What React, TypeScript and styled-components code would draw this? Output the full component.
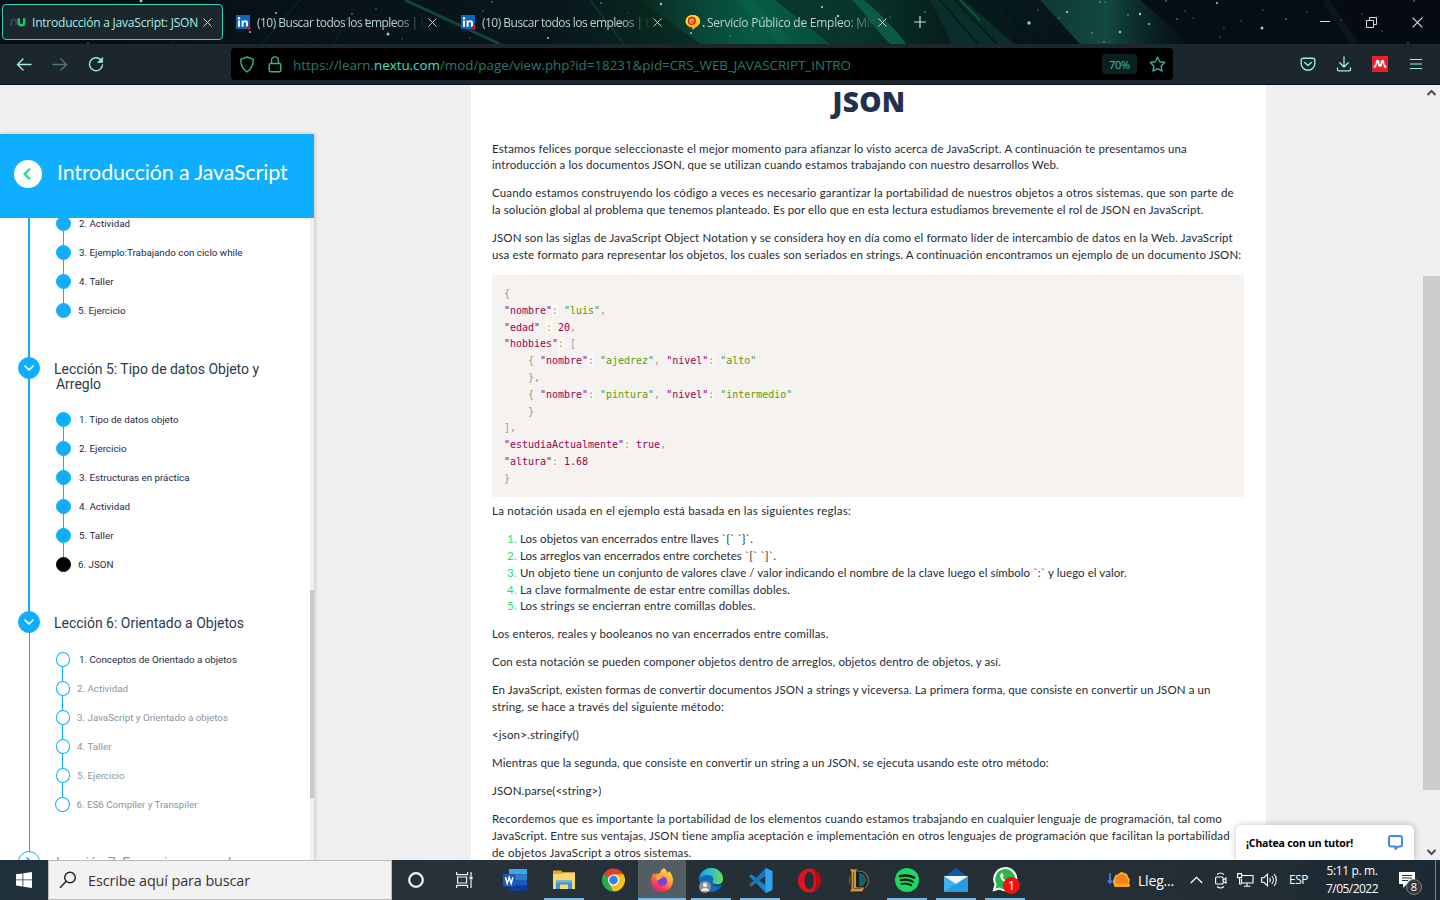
import React, { useLayoutEffect, useRef, useState } from "react";
import styled, { createGlobalStyle } from "styled-components";

const Global = createGlobalStyle`
  * { box-sizing: border-box; }
  body { margin: 0; overflow: hidden; background: #efefef; }
`;

const ui = `"Open Sans", "Noto Sans", sans-serif`;

/* ---------- text set to a given measure ---------- */

const FitSpan = styled.span`
  display: inline-block;
  white-space: pre;
  flex: none;
`;

function Fit({ w, children }: { w: number; children: React.ReactNode }) {
  const ref = useRef<HTMLSpanElement>(null);
  const [spacing, setSpacing] = useState(0);
  useLayoutEffect(() => {
    const el = ref.current;
    if (!el) return;
    const count = (el.textContent || "").length;
    setSpacing((w - el.getBoundingClientRect().width) / Math.max(1, count));
  }, [w]);
  return (
    <FitSpan ref={ref} style={{ letterSpacing: `${spacing}px` }}>
      {children}
    </FitSpan>
  );
}

/* ---------- frame ---------- */

const Screen = styled.div`
  width: 1440px;
  height: 900px;
  display: flex;
  flex-direction: column;
  overflow: hidden;
  font-family: ${ui};
`;

/* ---------- tab strip ---------- */

const TabStrip = styled.header`
  position: relative;
  height: 44px;
  flex: none;
  display: flex;
  align-items: center;
  padding-left: 2px;
  background: #060c14;
`;

const Sky = styled.svg`
  position: absolute;
  inset: 0;
  width: 1440px;
  height: 44px;
`;

const Tab = styled.div<{ $active?: boolean }>`
  position: relative;
  width: 221px;
  height: 36px;
  margin-right: 4px;
  padding: 0 9px 0 ${(p) => (p.$active ? 7 : 8)}px;
  display: flex;
  align-items: center;
  border-radius: 4px;
  border: ${(p) => (p.$active ? "1px solid #35d5bb" : "0")};
  background: ${(p) => (p.$active ? "#1c262d" : "transparent")};
  color: ${(p) => (p.$active ? "#a5f0e0" : "#b5d3cf")};
  font-size: 12px;
`;

const TabIcon = styled.span`
  width: 16px;
  height: 16px;
  margin-right: 6px;
  flex: none;
  display: flex;
  align-items: center;
  justify-content: center;
`;

const TabTitle = styled.span<{ $fade?: boolean }>`
  width: 170px;
  height: 20px;
  line-height: 20px;
  margin-top: 2px;
  flex: none;
  ${(p) => p.$fade && "mask-image: linear-gradient(90deg, #000 138px, transparent 170px);"}
`;

const TabClose = styled.span`
  width: 10px;
  display: flex;
  justify-content: center;
  flex: none;
`;

const NewTab = styled.span`
  position: relative;
  width: 35px;
  display: flex;
  justify-content: center;
`;

const WindowControls = styled.div`
  position: relative;
  margin-left: auto;
  display: flex;
`;

const WindowButton = styled.span`
  width: 46px;
  display: flex;
  justify-content: center;
  align-items: center;
`;

/* ---------- toolbar ---------- */

const Toolbar = styled.nav`
  height: 41px;
  flex: none;
  display: flex;
  align-items: center;
  padding: 0 6px;
  background: #1c262d;
  border-bottom: 1px solid #0a1016;
`;

const ToolButton = styled.span<{ $dim?: boolean }>`
  width: 36px;
  height: 32px;
  display: flex;
  align-items: center;
  justify-content: center;
  color: #9aeedd;
  opacity: ${(p) => (p.$dim ? 0.4 : 1)};
`;

const NavButtons = styled.div`
  width: 225px;
  display: flex;
`;

const AddressBar = styled.div`
  width: 942px;
  height: 32px;
  display: flex;
  align-items: center;
  padding-left: 2px;
  border-radius: 4px;
  background: #000;
  color: #30b49c;
`;

const AddressIcon = styled.span`
  width: 28px;
  flex: none;
  display: flex;
  justify-content: center;
`;

const Url = styled.span`
  margin-left: 4px;
  width: 809px;
  flex: none;
  font-size: 13.4px;
  color: #26796c;
  padding-top: 1px;
  b {
    font-weight: 400;
    color: #3de0c4;
  }
`;

const ZoomChip = styled.span`
  width: 35px;
  height: 20px;
  flex: none;
  display: flex;
  align-items: center;
  justify-content: center;
  border-radius: 3px;
  background: #0a201e;
  color: #3ac7ae;
  font-size: 11px;
`;

const StarSlot = styled.span`
  width: 36px;
  padding-left: 4px;
  flex: none;
  display: flex;
  justify-content: center;
`;

const Extensions = styled.div`
  margin-left: auto;
  display: flex;
`;

/* ---------- page ---------- */

const Page = styled.div`
  height: 775px;
  flex: none;
  display: flex;
  overflow: hidden;
  background: #efefef;
  position: relative;
`;

const Sidebar = styled.aside`
  width: 314px;
  height: 726px;
  margin-top: 49px;
  flex: none;
  background: #fff;
  box-shadow: 1px 0 4px rgba(0, 0, 0, 0.18);
  font-family: Roboto, sans-serif;
`;

const CourseHeader = styled.div`
  height: 84px;
  display: flex;
  align-items: center;
  padding: 0 0 8px 14px;
  background: #0faeff;
  color: #fff;
  font-family: Lato, sans-serif;
  font-size: 21.5px;
`;

const BackButton = styled.span`
  width: 28px;
  height: 28px;
  margin: 3px 15px 0 0;
  border-radius: 50%;
  background: #fff;
  display: flex;
  align-items: center;
  justify-content: center;
`;

const SidebarBody = styled.div`
  height: 642px;
  display: flex;
  overflow: hidden;
`;

const Lessons = styled.div`
  width: 310px;
  margin-top: -9px;
`;

const SideTrack = styled.div`
  width: 4px;
  padding-top: 372px;
  background: #f0f0f0;
`;

const SideThumb = styled.div`
  height: 208px;
  background: #c9c9c9;
`;

const blue = "linear-gradient(#0faeff, #0faeff)";

const Lesson = styled.section<{ $rail: "thick" | "thin" | "none" }>`
  background-repeat: no-repeat;
  ${(p) =>
    p.$rail === "thick"
      ? `background-image: ${blue}; background-position: 28px 0; background-size: 2px 100%;`
      : p.$rail === "thin"
      ? `background-image: ${blue}, ${blue}; background-position: 28px 0, 29px 0; background-size: 2px 42px, 1px 100%;`
      : `background-image: ${blue}; background-position: 29px 0; background-size: 1px 40px;`}
`;

const LessonHead = styled.div<{ $tall?: boolean; $muted?: boolean }>`
  height: ${(p) => (p.$tall ? 80 : 66)}px;
  display: flex;
  align-items: flex-start;
  padding: 32px 0 0 18px;
  color: ${(p) => (p.$muted ? "#8f98a3" : "#2b3a50")};
  font-size: 14px;
  line-height: 15px;
`;

const LessonMark = styled.span<{ $open?: boolean }>`
  width: 22px;
  height: 22px;
  margin-right: 14px;
  flex: none;
  border-radius: 50%;
  display: flex;
  align-items: center;
  justify-content: center;
  border: 1px solid #0faeff;
  background: ${(p) => (p.$open ? "#0faeff" : "#fff")};
  color: ${(p) => (p.$open ? "#fff" : "#0faeff")};
`;

const LessonTitle = styled.div`
  padding-top: 5px;
  display: flex;
  flex-direction: column;
`;

const SecondLine = styled.span`
  padding-left: 2px;
`;

const Item = styled.div<{ $last?: boolean; $first?: boolean; $open?: boolean; $muted?: boolean }>`
  height: 29px;
  display: flex;
  align-items: center;
  padding-left: ${(p) => (p.$open && p.$last ? 55 : p.$open ? 55.5 : 56)}px;
  color: ${(p) => (p.$muted ? "#8d95a0" : "#1d2c44")};
  font-size: 9.8px;
  background-image: ${blue};
  background-repeat: no-repeat;
  background-size: 1px ${(p) => (p.$last || p.$first ? "15px" : "100%")};
  background-position: ${(p) => (p.$open ? 62 : 63)}px ${(p) => (p.$first ? "14px" : "0")};
`;

const Dot = styled.span<{ $kind: "done" | "current" | "open" }>`
  width: ${(p) => (p.$kind === "open" ? 14.5 : 15)}px;
  height: 15px;
  flex: none;
  border-radius: 50%;
  border: 1px solid ${(p) => (p.$kind === "current" ? "#000" : "#0faeff")};
  background: ${(p) => (p.$kind === "done" ? "#0faeff" : p.$kind === "current" ? "#000" : "#fff")};
`;

const ItemText = styled.span<{ $gap: number }>`
  margin-left: ${(p) => p.$gap}px;
  line-height: 14px;
  margin-top: 1px;
`;

const Article = styled.main`
  width: 795px;
  margin-left: 157px;
  padding: 0 21px;
  flex: none;
  background: #fff;
  font-family: Lato, sans-serif;
  font-size: 11.5px;
  line-height: 16.8px;
  color: #252b33;
`;

const Title = styled.h1`
  margin: 0;
  height: 55.6px;
  padding-left: 1px;
  text-align: center;
  font: 800 28px/33px "Open Sans", sans-serif;
  color: #22304e;
`;

const Para = styled.p`
  margin: 0 0 11.2px;
  display: flex;
  flex-direction: column;
  align-items: flex-start;
`;

const Code = styled.pre`
  margin: 0 0 5.9px;
  padding: 11px 12px;
  width: 752px;
  height: 222.3px;
  background: #f5f2f0;
  font-family: "DejaVu Sans Mono", monospace;
  font-size: 10px;
  line-height: 16.8px;
  letter-spacing: -0.02px;
  color: #333;
`;

const Tok = styled.span<{ $t: "key" | "str" | "pun" | "op" }>`
  color: ${(p) => ({ key: "#905", str: "#690", pun: "#999", op: "#b88a3e" }[p.$t])};
  ${(p) => p.$t === "op" && "background: rgba(255,255,255,.5);"}
`;

const Rules = styled.ol`
  list-style: none;
  margin: 0 0 11.2px;
  padding: 0 0 0 14px;
`;

const Rule = styled.li`
  display: flex;
`;

const RuleNo = styled.span`
  width: 13px;
  margin-left: 1px;
  color: #14e57a;
`;

const PageScroll = styled.div`
  width: 17px;
  margin-left: auto;
  display: flex;
  flex-direction: column;
  align-items: center;
  background: #f0f0f0;
`;

const PageThumb = styled.div`
  width: 17px;
  height: 514px;
  margin: 175px 0 53px;
  background: #cdcdcd;
`;

const ScrollArrow = styled.svg`
  width: 17px;
  height: 16px;
  flex: none;
`;

const Chat = styled.div`
  position: absolute;
  left: 1236px;
  bottom: 0;
  width: 178px;
  height: 35px;
  padding: 0 10px;
  display: flex;
  align-items: center;
  justify-content: space-between;
  border-radius: 6px 6px 0 0;
  background: #fff;
  box-shadow: 0 0 6px rgba(0, 0, 0, 0.25);
  font: 700 10.5px/16px "Noto Sans", sans-serif;
  color: #000;
`;

/* ---------- taskbar ---------- */

const Taskbar = styled.footer`
  height: 40px;
  flex: none;
  display: flex;
  background: linear-gradient(90deg, #20303a 0, #27323a 30%, #242f36 55%, #262e35 80%, #1b2a33 100%);
  color: #fff;
`;

const TaskCell = styled.div<{ $active?: boolean; $running?: boolean; $gap?: number }>`
  position: relative;
  width: 48px;
  height: 40px;
  margin-left: ${(p) => p.$gap ?? 0}px;
  flex: none;
  display: flex;
  align-items: center;
  justify-content: center;
  background: ${(p) => (p.$active ? "#525d64" : "transparent")};
  &::after {
    content: "";
    position: absolute;
    bottom: 0;
    left: ${(p) => (p.$active ? 0 : 4)}px;
    right: ${(p) => (p.$active ? 0 : 4)}px;
    height: ${(p) => (p.$active || p.$running ? 2 : 0)}px;
    background: #76b9ed;
  }
`;

const Search = styled.div`
  width: 344px;
  height: 40px;
  flex: none;
  display: flex;
  align-items: center;
  padding-left: 10px;
  border: 1px solid #b9bbbc;
  background: #f2f2f2;
  color: #333;
  font-size: 14.4px;
  gap: 11px;
`;

const Tray = styled.div`
  margin-left: auto;
  width: 334px;
  display: flex;
  align-items: center;
  flex: none;
`;

const TraySlot = styled.span<{ $w: number }>`
  width: ${(p) => p.$w}px;
  height: 40px;
  flex: none;
  display: flex;
  align-items: center;
  justify-content: center;
`;

const Weather = styled.span`
  width: 43px;
  font-size: 14px;
`;

const Lang = styled.span`
  width: 37px;
  padding-left: 8px;
  margin-top: -2px;
  font-size: 11.8px;
`;

const Clock = styled.div`
  width: 52px;
  margin-top: -1px;
  display: flex;
  flex-direction: column;
  align-items: center;
  font-size: 12px;
  line-height: 18px;
`;

const ShowDesktop = styled.span`
  height: 40px;
  width: 5px;
  border-left: 1px solid #7c868c;
  margin-left: auto;
`;

/* ---------- small drawings ---------- */

const Cross = ({ size = 9, color = "#c9dcda" }: { size?: number; color?: string }) => (
  <svg width={size} height={size} viewBox="0 0 10 10" stroke={color} strokeWidth="1.1" fill="none">
    <path d="M.6.6l8.800 8.800M9.400.6L.6 9.400" />
  </svg>
);

const LinkedIn = () => (
  <svg width="16" height="16" viewBox="0 0 16 16">
    <rect x="1" y="1" width="14" height="14" fill="#0a66c2" />
    <g fill="#fff">
      <rect x="3" y="6.4" width="2" height="6.4" />
      <circle cx="4" cy="4.2" r="1.2" />
      <path d="M6.6 6.4h1.9v.9c.4-.7 1.1-1.1 2-1.1 1.900 0 2.500 1.200 2.500 3v3.600h-2V9.500c0-.8-.1-1.600-1.100-1.600-1 0-1.300.7-1.300 1.600v3.300h-2z" />
    </g>
    <circle cx="13.700" cy="13.800" r="2.100" fill="#d11124" />
  </svg>
);

const NextU = () => (
  <svg width="17" height="16" viewBox="0 0 17 16" fill="none" strokeWidth="2.500">
    <path d="M1.300 12V8.200c0-1.800 1-3 2.700-3s2.700 1.200 2.700 3V12" stroke="#34424f" />
    <path d="M9.300 4v4.500c0 1.800 1.100 3 2.900 3s2.900-1.200 2.900-3V4" stroke="#18cf6b" />
  </svg>
);

const Empleo = () => (
  <svg width="17" height="17" viewBox="0 0 17 17">
    <path d="M8.300.5c4.400 0 7.600 2.800 7.600 6.600 0 3-1.900 5.200-4 6.200-1.100.9-2.500 2.300-4 3.200l-.4-2.700C3.300 13.400.7 10.700.7 7.100.7 3.300 3.900.5 8.300.5z" fill="#fbb022" />
    <path d="M8.300.5c4.400 0 7.600 2.800 7.600 6.600 0 1-.3 2-.6 2.800C13 12 4 12 1.300 9.900.9 9 .7 8.100.7 7.100.7 3.300 3.900.5 8.300.5z" fill="#ffd329" />
    <circle cx="7.300" cy="6.800" r="4.300" fill="#d9201f" />
    <path d="M5.300 7h4c0-1.400-.8-2.200-2-2.200s-2.100.9-2.100 2.200.9 2.200 2.200 2.200c.8 0 1.300-.3 1.700-.7" stroke="#ffd329" strokeWidth="1.100" fill="none" />
  </svg>
);

const starField: number[][] = [
  [141, 1, 1.4], [88, 43, 0.8], [276, 13, 1], [250, 32, 1], [352, 14, 0.9], [366, 20, 1.1], [388, 34, 1.5], [376, 9, 0.8],
  [347, 19, 0.7], [402, 39, 0.7], [483, 11, 0.8], [548, 38, 1], [601, 3, 0.9], [492, 2, 0.9], [661, 4, 1.2], [620, 22, 0.7],
  [691, 33, 1], [703.7, 26, 1], [730, 36, 0.8], [741, 18, 0.9], [752, 30, 0.8], [822, 7, 1.1], [838, 16, 1.2], [858, 28, 0.8],
  [925, 12, 0.9], [890, 17, 0.8], [1029, 23, 1.7], [1067, 12, 1.1], [1059, 18, 0.8], [1038, 10, 0.8], [1100, 2, 0.9],
  [1105, 2, 0.8], [1128, 15, 0.9], [1140, 14, 1.2], [1120, 32, 1.2], [1092, 33, 0.9], [1104, 42, 0.9], [1149, 24, 1],
  [1177, 19, 0.9], [1166, 1, 0.9], [1185, 11, 0.8], [1217, 3, 1], [1193, 18, 0.7], [1220, 37, 0.8], [1262, 28, 1.5],
  [1286, 19, 0.9], [1263, 10, 0.8], [1307, 12, 0.7], [1241, 21, 0.7], [1224, 28, 0.7], [1362, 14, 0.8], [1414, 1, 0.9],
  [1382, 31, 0.8], [1408, 43, 0.8], [1341, 20, 0.7], [470, 38, 0.7], [628, 13, 0.6], [580, 24, 0.6],
];

const SkyArt = () => (
  <Sky viewBox="0 0 1440 44" preserveAspectRatio="none">
    <defs>
      <linearGradient id="base" x1="0" x2="1">
        <stop offset="0" stopColor="#070e15" />
        <stop offset=".38" stopColor="#08161c" />
        <stop offset=".46" stopColor="#08281f" />
        <stop offset=".53" stopColor="#09382c" />
        <stop offset=".6" stopColor="#083529" />
        <stop offset=".66" stopColor="#071c1c" />
        <stop offset=".8" stopColor="#060f16" />
        <stop offset="1" stopColor="#060a12" />
      </linearGradient>
      <linearGradient id="band" x1="0" x2="1">
        <stop offset="0" stopColor="#0a5540" stopOpacity=".1" />
        <stop offset=".6" stopColor="#075a42" />
        <stop offset="1" stopColor="#065039" />
      </linearGradient>
      <linearGradient id="band2" x1="0" x2="1">
        <stop offset="0" stopColor="#134f43" stopOpacity=".6" />
        <stop offset=".45" stopColor="#124a3f" />
        <stop offset="1" stopColor="#0b2024" stopOpacity=".1" />
      </linearGradient>
    </defs>
    <rect width="1440" height="44" fill="url(#base)" />
    <path d="M640 0h135l55 44H700z" fill="url(#band)" />
    <path d="M735 0h18l42 44h-16z" fill="#0a6b4d" opacity=".4" />
    <path d="M852 0c14 14 24 30 38 44h16C895 28 880 14 864 0z" fill="#0b5a43" />
    <path d="M405 0l95 44" stroke="#10453a" strokeWidth="3" />
    <path d="M590 0l34 44M790 0l45 44M820 0l30 44" stroke="#0b3d31" strokeWidth="1.500" />
    <path d="M300 0L262 44M180 30l-8 14M345 20l-10 24" stroke="#0b2422" strokeWidth="1.500" />
    <path d="M930 0h34l50 44h-62z" fill="#0b332d" opacity=".8" />
    <path d="M940 0l38 44M955 0l42 44M978 0l44 44M1000 4l40 40" stroke="#05110f" strokeWidth="2" opacity=".6" />
    <path d="M960 0l20 20" stroke="#0d5d45" strokeWidth="1.500" />
    <path d="M1040 0h100l50 44h-110z" fill="url(#band2)" />
    <path d="M1325 0l30 44" stroke="#0a161c" strokeWidth="8" />
    {starField.map(([x, y, r]) => (
      <circle key={`${x}-${y}`} cx={x} cy={y} r={r} fill="#a9e5d8" opacity={r >= 1 ? 0.9 : 0.45} />
    ))}
  </Sky>
);

const Chevron = ({ d }: { d: string }) => (
  <svg width="12" height="12" viewBox="0 0 12 12" fill="none" stroke="currentColor" strokeWidth="1.700" strokeLinecap="round" strokeLinejoin="round">
    <path d={d} />
  </svg>
);

/* ---------- data ---------- */

type Entry = { t: string; w: number };

const lesson4: Entry[] = [
  { t: "2. Actividad", w: 51 },
  { t: "3. Ejemplo:Trabajando con ciclo while", w: 163.5 },
  { t: "4. Taller", w: 34.5 },
  { t: "5. Ejercicio", w: 47.5 },
];
const lesson5: Entry[] = [
  { t: "1. Tipo de datos objeto", w: 99.5 },
  { t: "2. Ejercicio", w: 47.5 },
  { t: "3. Estructuras en práctica", w: 110.5 },
  { t: "4. Actividad", w: 51 },
  { t: "5. Taller", w: 34.5 },
  { t: "6. JSON", w: 35.5 },
];
const lesson6: Entry[] = [
  { t: "1. Conceptos de Orientado a objetos", w: 158 },
  { t: "2. Actividad", w: 51 },
  { t: "3. JavaScript y Orientado a objetos", w: 151 },
  { t: "4. Taller", w: 34.5 },
  { t: "5. Ejercicio", w: 47.5 },
  { t: "6. ES6 Compiler y Transpiler", w: 121 },
];

const rules: Entry[] = [
  { t: "Los objetos van encerrados entre llaves `{` `}`.", w: 233 },
  { t: "Los arreglos van encerrados entre corchetes `[` `]`.", w: 256 },
  { t: "Un objeto tiene un conjunto de valores clave / valor indicando el nombre de la clave luego el símbolo `:` y luego el valor.", w: 607 },
  { t: "La clave formalmente de estar entre comillas dobles.", w: 270 },
  { t: "Los strings se encierran entre comillas dobles.", w: 235.5 },
];

const intro: Entry[][] = [
  [
    { t: "Estamos felices porque seleccionaste el mejor momento para afianzar lo visto acerca de JavaScript. A continuación te presentamos una", w: 695 },
    { t: "introducción a los documentos JSON, que se utilizan cuando estamos trabajando con nuestro desarrollos Web.", w: 567 },
  ],
  [
    { t: "Cuando estamos construyendo los código a veces es necesario garantizar la portabilidad de nuestros objetos a otros sistemas, que son parte de", w: 742 },
    { t: "la solución global al problema que tenemos planteado. Es por ello que en esta lectura estudiamos brevemente el rol de JSON en JavaScript.", w: 711.5 },
  ],
  [
    { t: "JSON son las siglas de JavaScript Object Notation y se considera hoy en día como el formato líder de intercambio de datos en la Web. JavaScript", w: 741 },
    { t: "usa este formato para representar los objetos, los cuales son seriados en strings. A continuación encontramos un ejemplo de un documento JSON:", w: 749.5 },
  ],
];

const closing: Entry[][] = [
  [{ t: "Los enteros, reales y booleanos no van encerrados entre comillas.", w: 336.5 }],
  [{ t: "Con esta notación se pueden componer objetos dentro de arreglos, objetos dentro de objetos, y así.", w: 509 }],
  [
    { t: "En JavaScript, existen formas de convertir documentos JSON a strings y viceversa. La primera forma, que consiste en convertir un JSON a un", w: 719 },
    { t: "string, se hace a través del siguiente método:", w: 232 },
  ],
  [{ t: "<json>.stringify()", w: 87 }],
  [{ t: "Mientras que la segunda, que consiste en convertir un string a un JSON, se ejecuta usando este otro método:", w: 557 }],
  [{ t: "JSON.parse(<string>)", w: 109.5 }],
  [
    { t: "Recordemos que es importante la portabilidad de los elementos cuando estamos trabajando en cualquier lenguaje de programación, tal como", w: 730 },
    { t: "JavaScript. Entre sus ventajas, JSON tiene amplia aceptación e implementación en otros lenguajes de programación que facilitan la portabilidad", w: 738 },
    { t: "de objetos JavaScript a otros sistemas.", w: 199.5 },
  ],
];

const Paragraphs = ({ items }: { items: Entry[][] }) => (
  <>
    {items.map((lines, i) => (
      <Para key={i}>
        {lines.map((l) => (
          <Fit key={l.t} w={l.w}>{l.t}</Fit>
        ))}
      </Para>
    ))}
  </>
);

type T = ["key" | "str" | "pun" | "op" | "sp", string];
const code: T[][] = [
  [["pun", "{"]],
  [["key", '"nombre"'], ["op", ":"], ["sp", " "], ["str", '"luis"'], ["pun", ","]],
  [["key", '"edad"'], ["sp", " "], ["op", ":"], ["sp", " "], ["key", "20"], ["pun", ","]],
  [["key", '"hobbies"'], ["op", ":"], ["sp", " "], ["pun", "["]],
  [["sp", "    "], ["pun", "{"], ["sp", " "], ["key", '"nombre"'], ["op", ":"], ["sp", " "], ["str", '"ajedrez"'], ["pun", ","], ["sp", " "], ["key", '"nivel"'], ["op", ":"], ["sp", " "], ["str", '"alto"']],
  [["sp", "    "], ["pun", "},"]],
  [["sp", "    "], ["pun", "{"], ["sp", " "], ["key", '"nombre"'], ["op", ":"], ["sp", " "], ["str", '"pintura"'], ["pun", ","], ["sp", " "], ["key", '"nivel"'], ["op", ":"], ["sp", " "], ["str", '"intermedio"']],
  [["sp", "    "], ["pun", "}"]],
  [["pun", "],"]],
  [["key", '"estudiaActualmente"'], ["op", ":"], ["sp", " "], ["key", "true"], ["pun", ","]],
  [["key", '"altura"'], ["op", ":"], ["sp", " "], ["key", "1.68"]],
  [["pun", "}"]],
];

const Items = ({ list, open, clipped }: { list: Entry[]; open?: boolean; clipped?: boolean }) => (
  <>
    {list.map((e, i) => {
      const last = i === list.length - 1;
      const muted = open && i > 0;
      const kind = open ? "open" : e.t === "6. JSON" ? "current" : "done";
      return (
        <Item key={e.t} $last={last} $first={i === 0 && !clipped} $open={open} $muted={muted}>
          <Dot $kind={kind} />
          <ItemText $gap={open ? (muted ? 7 : 9) : last ? 7 : 8}>
            <Fit w={e.w}>{e.t}</Fit>
          </ItemText>
        </Item>
      );
    })}
  </>
);

/* ---------- taskbar icons ---------- */

const Word = () => (
  <svg width="24" height="24" viewBox="0 0 24 24">
    <path d="M6 1h18v5.500H6z" fill="#41a5ee" />
    <path d="M6 6.500h18V12H6z" fill="#2b7cd3" />
    <path d="M6 12h18v5.500H6z" fill="#185abd" />
    <path d="M6 17.500h18V23H6z" fill="#103f91" />
    <rect x="0" y="6" width="12.500" height="12.500" rx="1" fill="#185abd" />
    <path d="M2.500 9.200l1.700 6.200 2-6 2 6 1.700-6.200" fill="none" stroke="#fff" strokeWidth="1.500" />
  </svg>
);
const Folder = () => (
  <svg width="22" height="22" viewBox="0 0 22 22">
    <path d="M0 1.500h8l2 2h12V20H0z" fill="#e9a825" />
    <path d="M0 5h9l2-1.500h11V20H0z" fill="#ffd768" />
    <path d="M3 20v-8.500h16V20h-4v-4.500H7V20z" fill="#3a96dd" />
    <path d="M3 11.500h16v2H3z" fill="#67b8ea" />
  </svg>
);
const Chrome = () => (
  <svg width="23" height="24" viewBox="-12 -12 24 24">
    <path d="M0 0L-10.400-6A12 12 0 0 1 10.400-6z" fill="#e33b2e" />
    <path d="M0 0L10.400-6A12 12 0 0 1 0 12z" fill="#fbc116" />
    <path d="M0 0L0 12A12 12 0 0 1-10.400-6z" fill="#2da94f" />
    <path d="M0-6h10.400L5 2z" fill="#fbc116" />
    <path d="M-10.400-6L-5 3 0 0z" fill="#2da94f" />
    <path d="M5 3L0 12-4 5z" fill="#fbc116" />
    <circle r="5.800" fill="#fff" />
    <circle r="4.600" fill="#3b7ded" />
  </svg>
);
const Firefox = () => (
  <svg width="24" height="26" viewBox="0 0 24 26">
    <defs>
      <linearGradient id="ff" x1=".8" y1="0" x2=".2" y2="1">
        <stop offset="0" stopColor="#ffe84a" />
        <stop offset=".45" stopColor="#ff9a2e" />
        <stop offset=".75" stopColor="#fb3b4f" />
        <stop offset="1" stopColor="#e41b8b" />
      </linearGradient>
    </defs>
    <path d="M14 1c2 1.500 3 3.300 3.400 5 1-.5 1.400-1.300 1.500-2 2.600 2.400 4.300 6 4.100 10-.3 6.300-5 10.800-11 10.800S1 20.200 1 14.200C1 10.500 2.300 7.500 4 5.500c.1 1 .4 1.800.9 2.300C6.300 6.500 8 6.200 9.600 6.600 10.300 4 12 2 14 1z" fill="url(#ff)" />
    <circle cx="12.300" cy="14.200" r="4.800" fill="#7a3fe0" />
    <path d="M6.500 10c2.500-1.500 5-.8 6.500 1-3 .2-3.500 1.500-5 2.500-1.200-.6-1.700-2-1.500-3.500z" fill="#ffb02e" />
  </svg>
);
const Edge = () => (
  <svg width="26" height="26" viewBox="0 0 26 26">
    <defs>
      <linearGradient id="edge" x1="0" x2="1">
        <stop offset="0" stopColor="#1d9de6" />
        <stop offset=".5" stopColor="#2cc3c6" />
        <stop offset="1" stopColor="#6ddc4b" />
      </linearGradient>
    </defs>
    <circle cx="13" cy="13" r="12" fill="#1568bf" />
    <path d="M1 12C2 5 7 1 13 1c7 0 12 5 12 10.500 0 4-3 6-6.200 6-2.800 0-4.300-1-4.300-2.300 0-1 1-1.400 1-3.200C15.500 9.500 12.500 8 9.500 8 5.500 8 2 10 1 12z" fill="url(#edge)" />
    <path d="M14.500 15.200c0 2 2.500 4 6 3.800 1.300-.1 2.500-.5 3.500-1.200l2-1v-3l-3 3.200c-2 1.200-7 1-8.500-1.800z" fill="#242f36" />
    <circle cx="7" cy="20" r="6" fill="#8d8f92" />
    <circle cx="7" cy="18" r="2.200" fill="#e9e9e9" />
    <path d="M3 24c0-4 8-4 8 0z" fill="#e9e9e9" />
  </svg>
);
const Code2 = () => (
  <svg width="25" height="25" viewBox="0 0 25 25">
    <path d="M18 0l6.500 3v19L18 25z" fill="#2aa5f0" />
    <path d="M1 8l2.200-1.800L18 17.500V25z" fill="#1584cf" />
    <path d="M1 17l2.200 1.800L18 7.500V0z" fill="#1b75bd" />
    <path d="M18 0v25l-1-.8V.8z" fill="#1f93dd" />
  </svg>
);
const Opera = () => (
  <svg width="23" height="25" viewBox="0 0 23 25">
    <ellipse cx="11.500" cy="12.500" rx="11.500" ry="12" fill="#e3121f" />
    <path d="M14 1c5 1 9 6 9 11.500S19 23 14 24c3-2 4-6 4-11.500S17 3 14 1z" fill="#b00a15" />
    <ellipse cx="11.300" cy="12.500" rx="4.800" ry="8.800" fill="#242f36" />
  </svg>
);
const League = () => (
  <svg width="24" height="25" viewBox="0 0 24 25">
    <circle cx="13" cy="12.500" r="9.500" fill="#0b2229" stroke="#8a6b33" strokeWidth="1.200" />
    <path d="M13 5c4 0 7.500 3 7.500 8l-3.500 5h-4z" fill="#165f69" />
    <path d="M3 .8h9.500l-2 2.500V19H19l-2.500 5H3l2-3V4z" fill="#c59a47" stroke="#2a1e0c" strokeWidth="1" />
    <path d="M7.500 4v16.500h8" stroke="#7c5b25" strokeWidth="1" fill="none" />
  </svg>
);
const Spotify = () => (
  <svg width="24" height="24" viewBox="0 0 24 24" fill="none" stroke="#101a14" strokeLinecap="round">
    <circle cx="12" cy="12" r="12" fill="#1ed760" stroke="none" />
    <path d="M5 8.300c4.500-1.300 9.800-.9 14 1.400" strokeWidth="2.500" />
    <path d="M5.800 12.300c4-1.100 8.400-.7 12 1.300" strokeWidth="2.200" />
    <path d="M6.400 16c3.400-.9 6.900-.5 9.900 1.200" strokeWidth="1.800" />
  </svg>
);
const Mail = () => (
  <svg width="24" height="25" viewBox="0 0 24 25">
    <path d="M0 9L12 0l12 9z" fill="#0f5aa8" />
    <path d="M0 8h24v16H0z" fill="#3cb2ef" />
    <path d="M0 24L24 8v16z" fill="#1e93dc" opacity=".7" />
    <path d="M0 8h24l-12 8z" fill="#f5f5f5" />
  </svg>
);
const WhatsApp = () => (
  <svg width="26" height="28" viewBox="0 0 26 28">
    <path d="M2 24l1.600-5.600A11 11 0 1 1 7.500 22.500z" fill="#25b84a" stroke="#fff" strokeWidth="2" />
    <path d="M9 7.500c-2.500 2.500 1 8 5.500 9.500 2 .6 3.500-.6 3.500-2.200l-2.800-1.500-1.200 1.200c-1.500-.6-2.700-1.900-3.300-3.300l1.100-1.200L10.500 7z" fill="#fff" />
  </svg>
);

const CountBadge = styled.span`
  position: absolute;
  left: 22px;
  top: 17px;
  width: 17px;
  height: 17px;
  border-radius: 50%;
  background: #f50f0f;
  color: #fff;
  font-size: 13px;
  line-height: 17px;
  text-align: center;
`;

const NoticeSlot = styled.span`
  position: relative;
  width: 20px;
  height: 40px;
  margin-left: 20px;
`;

const NoticeIcon = styled.svg`
  display: block;
  margin: 12px 0 0 1px;
`;

const NoticeBadge = styled.span`
  position: absolute;
  left: 8px;
  top: 19px;
  width: 16px;
  height: 16px;
  border-radius: 50%;
  border: 1px solid #7b8287;
  background: #32383c;
  font-size: 11px;
  line-height: 14px;
  text-align: center;
`;

/* ---------- app ---------- */

export default function App() {
  return (
    <Screen>
      <Global />
      <TabStrip>
        <SkyArt />
        <Tab $active>
          <TabIcon><NextU /></TabIcon>
          <TabTitle><Fit w={166}>Introducción a JavaScript: JSON</Fit></TabTitle>
          <TabClose><Cross color="#a5f0e0" /></TabClose>
        </Tab>
        {[0, 1].map((i) => (
          <Tab key={i}>
            <TabIcon><LinkedIn /></TabIcon>
            <TabTitle $fade><Fit w={169}>(10) Buscar todos los empleos | L</Fit></TabTitle>
            <TabClose><Cross /></TabClose>
          </Tab>
        ))}
        <Tab>
          <TabIcon><Empleo /></TabIcon>
          <TabTitle $fade><Fit w={168}>Servicio Público de Empleo: Mis</Fit></TabTitle>
          <TabClose><Cross /></TabClose>
        </Tab>
        <NewTab>
          <svg width="12" height="12" viewBox="0 0 12 12" stroke="#c9dcda" strokeWidth="1.200"><path d="M6 0v12M0 6h12" /></svg>
        </NewTab>
        <WindowControls>
          <WindowButton><svg width="10" height="10" stroke="#d5dede"><path d="M0 4.500h10" /></svg></WindowButton>
          <WindowButton>
            <svg width="11" height="11" fill="none" stroke="#d5dede"><path d="M.5 3.500h7v7h-7zM3.500 3V.5h7v7H8" /></svg>
          </WindowButton>
          <WindowButton><Cross size={11} color="#d5dede" /></WindowButton>
        </WindowControls>
      </TabStrip>

      <Toolbar>
        <NavButtons>
          <ToolButton>
            <svg width="16" height="16" viewBox="0 0 16 16" fill="none" stroke="currentColor" strokeWidth="1.400" strokeLinecap="round"><path d="M15 8.500H1.500M7 3L1.500 8.500 7 14" /></svg>
          </ToolButton>
          <ToolButton $dim>
            <svg width="16" height="16" viewBox="0 0 16 16" fill="none" stroke="currentColor" strokeWidth="1.400" strokeLinecap="round"><path d="M1 8.500h13.500M9 3l5.500 5.500L9 14" /></svg>
          </ToolButton>
          <ToolButton>
            <svg width="16" height="16" viewBox="0 0 16 16" fill="none" stroke="currentColor" strokeWidth="1.400" strokeLinecap="round">
              <path d="M12.600 3.600A6.500 6.500 0 1 0 14.500 9" />
              <path d="M14.700 1.500v5H9.800z" fill="currentColor" strokeWidth=".6" />
            </svg>
          </ToolButton>
        </NavButtons>
        <AddressBar>
          <AddressIcon>
            <svg width="16" height="17" viewBox="0 0 16 17" fill="none" stroke="currentColor" strokeWidth="1.400" strokeLinejoin="round"><path d="M8 1l6.300 2.300c0 5.500-1.500 9.700-6.300 12.700C3.200 13 1.700 8.800 1.700 3.300z" /></svg>
          </AddressIcon>
          <AddressIcon>
            <svg width="14" height="17" viewBox="0 0 14 17" fill="none" stroke="currentColor" strokeWidth="1.400"><rect x="1.200" y="7.500" width="11.600" height="8.300" rx="1.600" /><path d="M3.600 7.500V4.300a3.400 3.400 0 0 1 6.800 0v3.200" /></svg>
          </AddressIcon>
          <Url>
            <Fit w={558}>https://learn.<b>nextu.com</b>/mod/page/view.php?id=18231&amp;pid=CRS_WEB_JAVASCRIPT_INTRO</Fit>
          </Url>
          <ZoomChip><Fit w={21}>70%</Fit></ZoomChip>
          <StarSlot>
            <svg width="17" height="17" viewBox="0 0 17 17" fill="none" stroke="currentColor" strokeWidth="1.400" strokeLinejoin="round"><path d="M8.500 1.200l2.200 4.600 5 .7-3.600 3.500.9 5.100-4.500-2.400L4 15.100l.9-5.100L1.300 6.500l5-.7z" /></svg>
          </StarSlot>
        </AddressBar>
        <Extensions>
          <ToolButton>
            <svg width="16" height="16" viewBox="0 0 16 16" fill="none" stroke="currentColor" strokeWidth="1.400" strokeLinecap="round" strokeLinejoin="round"><path d="M3 2.200h10a1.800 1.800 0 0 1 1.800 1.800v3.500a6.800 6.800 0 0 1-13.600 0V4A1.800 1.800 0 0 1 3 2.200z" /><path d="M4.700 6.500L8 9.600l3.300-3.100" /></svg>
          </ToolButton>
          <ToolButton>
            <svg width="16" height="16" viewBox="0 0 16 16" fill="none" stroke="currentColor" strokeWidth="1.300" strokeLinecap="round"><path d="M8 .8v10M3.700 6.800L8 11l4.300-4.200M1.500 12v1.500c0 .8.600 1.300 1.300 1.300h10.400c.7 0 1.300-.5 1.300-1.300V12" /></svg>
          </ToolButton>
          <ToolButton>
            <svg width="16" height="16" viewBox="0 0 16 16">
              <rect width="16" height="16" fill="#e9202f" />
              <g fill="none" stroke="#fff" strokeWidth="1.500" strokeLinecap="round"><path d="M2.800 10.700c1.300-.8 1.100-2.700 1.900-4.200M6.600 6v2.500M9.400 6v2.500M13.200 10.700c-1.300-.8-1.100-2.700-1.900-4.200" /></g>
              <g fill="#fff"><circle cx="5.500" cy="5.500" r="1.800" /><circle cx="10.500" cy="5.500" r="1.800" /><circle cx="8" cy="9.200" r="1.700" /><circle cx="3" cy="10.500" r="1.300" /><circle cx="13" cy="10.500" r="1.300" /></g>
            </svg>
          </ToolButton>
          <ToolButton>
            <svg width="12" height="12" stroke="currentColor" strokeWidth="1.100"><path d="M0 1.500h12M0 6h12M0 10.500h12" /></svg>
          </ToolButton>
        </Extensions>
      </Toolbar>

      <Page>
        <Sidebar>
          <CourseHeader>
            <BackButton>
              <svg width="12" height="14" viewBox="0 0 12 14" fill="none" stroke="#14e57a" strokeWidth="2.200"><path d="M8 1.800L2.600 7 8 12.200" /></svg>
            </BackButton>
            <Fit w={230.5}>Introducción a JavaScript</Fit>
          </CourseHeader>
          <SidebarBody>
            <Lessons>
              <Lesson $rail="thick"><Items list={lesson4} clipped /></Lesson>
              <Lesson $rail="thick">
                <LessonHead $tall>
                  <LessonMark $open><Chevron d="M2 4l4 4 4-4" /></LessonMark>
                  <LessonTitle>
                    <Fit w={205}>Lección 5: Tipo de datos Objeto y</Fit>
                    <SecondLine><Fit w={45}>Arreglo</Fit></SecondLine>
                  </LessonTitle>
                </LessonHead>
                <Items list={lesson5} />
              </Lesson>
              <Lesson $rail="thin">
                <LessonHead>
                  <LessonMark $open><Chevron d="M2 4l4 4 4-4" /></LessonMark>
                  <LessonTitle><Fit w={190}>Lección 6: Orientado a Objetos</Fit></LessonTitle>
                </LessonHead>
                <Items list={lesson6} open />
              </Lesson>
              <Lesson $rail="none">
                <LessonHead $muted>
                  <LessonMark><Chevron d="M4 2l4 4-4 4" /></LessonMark>
                  <LessonTitle><SecondLine><Fit w={202}>Lección 7: Expresiones regulares</Fit></SecondLine></LessonTitle>
                </LessonHead>
              </Lesson>
            </Lessons>
            <SideTrack><SideThumb /></SideTrack>
          </SidebarBody>
        </Sidebar>

        <Article>
          <Title><Fit w={73}>JSON</Fit></Title>
          <Paragraphs items={intro} />
          <Code>
            {code.map((line, i) => (
              <React.Fragment key={i}>
                {line.map(([t, s], j) => (t === "sp" ? s : <Tok key={j} $t={t}>{s}</Tok>))}
                {"\n"}
              </React.Fragment>
            ))}
          </Code>
          <Paragraphs items={[[{ t: "La notación usada en el ejemplo está basada en las siguientes reglas:", w: 359 }]]} />
          <Rules>
            {rules.map((r, i) => (
              <Rule key={r.t}>
                <RuleNo>{i + 1}.</RuleNo>
                <Fit w={r.w}>{r.t}</Fit>
              </Rule>
            ))}
          </Rules>
          <Paragraphs items={closing} />
        </Article>

        <PageScroll>
          <ScrollArrow viewBox="0 0 17 16" fill="none" stroke="#505050" strokeWidth="2"><path d="M4.500 10l4-4 4 4" /></ScrollArrow>
          <PageThumb />
          <ScrollArrow viewBox="0 0 17 16" fill="none" stroke="#505050" strokeWidth="2"><path d="M4.500 7l4 4 4-4" /></ScrollArrow>
        </PageScroll>

        <Chat>
          <Fit w={107}>¡Chatea con un tutor!</Fit>
          <svg width="17" height="17" viewBox="0 0 17 17" fill="none" stroke="#4384f5" strokeWidth="2" strokeLinejoin="round"><path d="M4 2h9c1.300 0 2 .7 2 2v6.500c0 1.300-.7 2-2 2h-1.800L8.500 15v-2.500H4c-1.300 0-2-.7-2-2V4c0-1.300.7-2 2-2z" /></svg>
        </Chat>
      </Page>

      <Taskbar>
        <TaskCell>
          <svg width="16" height="16" fill="#fff"><path d="M0 2.300L6.500 1.400v6.100H0zM7.300 1.300L16 0v7.500H7.300zM0 8.300h6.500v6.200L0 13.600zM7.300 8.300H16V16l-8.700-1.300z" /></svg>
        </TaskCell>
        <Search>
          <svg width="18" height="18" viewBox="0 0 18 18" fill="none" stroke="#222" strokeWidth="1.400"><circle cx="11" cy="6.500" r="5.300" /><path d="M7.200 10.300L1 16.800" /></svg>
          <Fit w={162}>Escribe aquí para buscar</Fit>
        </Search>
        <TaskCell><svg width="18" height="18" fill="none" stroke="#f2f2f2" strokeWidth="2.200"><circle cx="9" cy="9" r="6.800" /></svg></TaskCell>
        <TaskCell>
          <svg width="17" height="16" fill="none" stroke="#f2f2f2" strokeWidth="1.200"><path d="M.6 0v2.600h11V0M.6 16v-2.600h11V16M1.600 5h9v6h-9zM15 0v4M15 8v8" /><path d="M13.500 4.500h3v3h-3z" fill="#f2f2f2" stroke="none" /></svg>
        </TaskCell>
        <TaskCell $gap={3}><Word /></TaskCell>
        <TaskCell $gap={1} $running><Folder /></TaskCell>
        <TaskCell $gap={1}><Chrome /></TaskCell>
        <TaskCell $gap={1} $active><Firefox /></TaskCell>
        <TaskCell $gap={1} $running><Edge /></TaskCell>
        <TaskCell $gap={1} $running><Code2 /></TaskCell>
        <TaskCell $gap={1}><Opera /></TaskCell>
        <TaskCell $gap={1}><League /></TaskCell>
        <TaskCell $gap={1} $running><Spotify /></TaskCell>
        <TaskCell $gap={1} $running><Mail /></TaskCell>
        <TaskCell $gap={1} $running><WhatsApp /><CountBadge>1</CountBadge></TaskCell>
        <Tray>
          <TraySlot $w={26}>
            <svg width="24" height="18" viewBox="0 0 24 18">
              <path d="M3 2v10M.8 9.500L3 12.200l2.200-2.700" stroke="#2f80ed" strokeWidth="1.800" fill="none" />
              <path d="M6.500 13.500l-.5-3 1-3 1-3 3-1.300L14 1l3 .8 3 1.200 1.200 3 1.600 2.500-.8 3 .5 2z" fill="#ffb629" />
              <circle cx="14.500" cy="9.500" r="6.500" fill="#f58220" />
              <rect x="7" y="12.500" width="16" height="3.500" rx="1.500" fill="#ffa51f" />
            </svg>
          </TraySlot>
          <TraySlot $w={6} />
          <Weather><Fit w={36}>Lleg...</Fit></Weather>
          <TraySlot $w={31}>
            <svg width="13" height="8" fill="none" stroke="#fff" strokeWidth="1.300"><path d="M.8 7l5.700-5.700L12.200 7" /></svg>
          </TraySlot>
          <TraySlot $w={18}>
            <svg width="12" height="17" viewBox="0 0 12 17" fill="none" stroke="#fff" strokeWidth="1.100"><rect x=".6" y="5" width="7.500" height="7" rx="1" /><path d="M8 8l3-2v5L8 9.500M2 2.500C4 .8 7 .8 9 2.500M2 14.500c2 1.700 5 1.700 7 0" /></svg>
          </TraySlot>
          <TraySlot $w={30}>
            <svg width="17" height="14" viewBox="0 0 17 14" fill="none" stroke="#fff" strokeWidth="1.100"><path d="M5 2.500h11v7.500H4.500V6M10 10v3M7 13.300h6.500M.6.600h4v4h-4zM2.600 4.600V11h2" /></svg>
          </TraySlot>
          <TraySlot $w={18}>
            <svg width="17" height="14" viewBox="0 0 17 14" fill="none" stroke="#fff" strokeWidth="1.100"><path d="M.6 4.700h2.200L6.500 1.200v11.600L2.800 9.300H.6zM8.500 5c1 1.200 1 2.800 0 4M10.800 3c2 2.300 2 5.700 0 8M13.200 1.200c2.800 3.400 2.800 8.200 0 11.600" /></svg>
          </TraySlot>
          <TraySlot $w={3} />
          <Lang><Fit w={19}>ESP</Fit></Lang>
          <TraySlot $w={8} />
          <Clock>
            <Fit w={51}>5:11 p. m.</Fit>
            <Fit w={52}>7/05/2022</Fit>
          </Clock>
          <NoticeSlot>
            <NoticeIcon width="17" height="17" viewBox="0 0 17 17"><path d="M0 0h16v12H8l-4 4v-4H0z" fill="#fff" /><path d="M3 3.500h10M3 6h10M3 8.500h6" stroke="#26323a" /></NoticeIcon>
            <NoticeBadge>8</NoticeBadge>
          </NoticeSlot>
          <ShowDesktop />
        </Tray>
      </Taskbar>
    </Screen>
  );
}
